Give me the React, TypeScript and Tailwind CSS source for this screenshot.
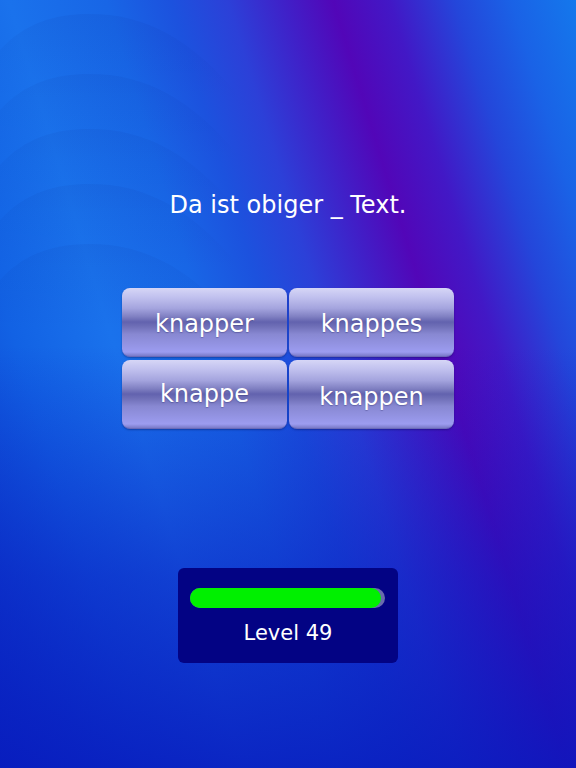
import React from "react";

const answers = [
  { t: "knapper", cls: "pt-[3px]" },
  { t: "knappes", cls: "pt-[3px]" },
  { t: "knappe", cls: "" },
  { t: "knappen", cls: "pt-[6px]" },
];

function Waves() {
  const ys = [10, 70, 125, 180, 240];
  return (
    <svg className="absolute inset-0 h-full w-full" viewBox="0 0 576 768" preserveAspectRatio="none">
      <defs>
        {ys.map((y, i) => (
          <linearGradient key={i} id={`wg${i}`} gradientUnits="userSpaceOnUse" x1="0" y1={y} x2="0" y2={y + 90}>
            <stop offset="0" stopColor="#001070" stopOpacity="0.06" />
            <stop offset="1" stopColor="#001070" stopOpacity="0" />
          </linearGradient>
        ))}
      </defs>
      {ys.map((y, i) => (
        <path
          key={i}
          d={`M-20,${y + 70} C10,${y + 10} 60,${y} 110,${y + 5} C190,${y + 15} 250,${y + 80} 330,${y + 230} L330,${y + 500} L-20,${y + 500} Z`}
          fill={`url(#wg${i})`}
        />
      ))}
    </svg>
  );
}

export default function App() {
  return (
    <div
      className="relative h-[768px] w-[576px] overflow-hidden bg-[linear-gradient(73deg,#0a3ccc_0%,#1262e4_18%,#1a72ec_30%,#1866e6_42%,#1c52de_50%,#2c40d8_57%,#4020c8_64%,#5206b8_70%,#4218c6_77%,#2446da_85%,#1a62e6_92%,#1478ec_100%)]"
      style={{ fontFamily: '"DejaVu Sans", sans-serif' }}
    >
      <Waves />
      <div className="absolute inset-0 bg-[linear-gradient(180deg,rgba(10,20,190,0)_0%,rgba(10,20,190,0)_45%,rgba(10,24,190,0.55)_75%,rgba(8,24,188,0.85)_100%)]" />
      <div className="relative flex h-full flex-col items-center pt-[191px]">
        <div className="text-[24px] leading-[28px] text-white">Da ist obiger _ Text.</div>
        <div className="mt-[69px] grid w-[332px] grid-cols-2 gap-x-[2px] gap-y-[3px]">
          {answers.map((a) => (
            <div
              key={a.t}
              className={`flex h-[69px] items-center justify-center rounded-[8px] border-b border-[#6a6ab8] bg-[linear-gradient(180deg,#d6d6f6_0%,#c0c0ee_14%,#a4a4de_30%,#8080c2_42%,#6262ae_50%,#7070b8_57%,#8888d2_68%,#9494e4_84%,#9c9cf0_94%,#7a7ac8_100%)] text-[24px] leading-[28px] text-white shadow-[0_1px_2px_rgba(0,0,60,0.35)] [text-shadow:0_1px_1px_rgba(40,40,100,0.35)] ${a.cls}`}
            >
              {a.t}
            </div>
          ))}
        </div>
        <div className="mt-[139px] flex h-[95px] w-[220px] flex-col items-center rounded-[6px] bg-[#030384] pt-[20px]">
          <div className="ml-[12px] mr-[13px] h-[20px] self-stretch rounded-full bg-[#6a6aae]">
            <div className="h-full w-[191px] rounded-full bg-[#00f000]" />
          </div>
          <div className="mt-[13px] text-[21px] leading-[24px] text-white">Level 49</div>
        </div>
      </div>
    </div>
  );
}
